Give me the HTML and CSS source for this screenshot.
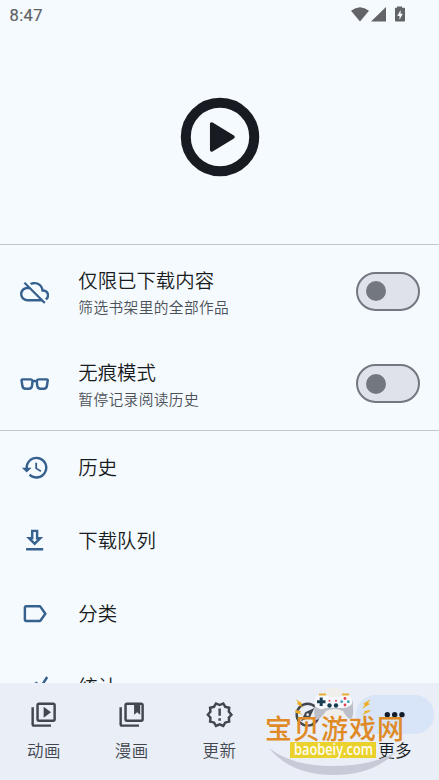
FILE: index.html
```html
<!DOCTYPE html>
<html lang="zh-CN">
<head>
<meta charset="utf-8">
<title>更多</title>
<link rel="stylesheet" href="styles.css">
</head>
<body>
<div class="screen">
  <header class="status">
    <span class="time">8:47</span>
    <svg class="status-icons" width="56" height="18" viewBox="0 0 56 18">
      <path d="M0 4.8Q9 -2.5 18 4.8L9 15.6z"/>
      <path d="M35 1v14.5H20z"/>
      <path d="M46 .5h5v1.3h2.2q.8 0 .8.8v12q0 .9-.8.9h-8.4q-.8 0-.8-.9v-12q0-.8.8-.8H46z"/>
      <path class="bolt" d="M49.6 4l-3.3 6h2.2v3.8l3.3-6h-2.2z"/>
    </svg>
  </header>
  <section class="hero">
    <svg class="logo" width="80" height="80" viewBox="0 0 80 80">
      <circle cx="40" cy="40" r="34.2"/>
      <path d="M31.7 27v26L53 40z"/>
    </svg>
  </section>
  <section class="modes">
    <div class="row tall">
      <svg class="icon" viewBox="0 0 24 24"><path d="M19.35 10.04A7.49 7.49 0 0 0 12 4c-1.48 0-2.85.43-4.01 1.17l1.46 1.46A5.497 5.497 0 0 1 17.5 11.5v.5H19c1.66 0 3 1.34 3 3 0 1.13-.64 2.11-1.56 2.62l1.45 1.45C23.16 18.16 24 16.68 24 15c0-2.64-2.05-4.78-4.65-4.96zM3 5.27l2.75 2.74C2.56 8.15 0 10.77 0 14c0 3.31 2.69 6 6 6h11.73l2 2L21 20.73 4.27 4 3 5.27zM7.73 10l8 8H6c-2.21 0-4-1.79-4-4s1.79-4 4-4h1.73z"/></svg>
      <div class="copy"><p class="title">仅限已下载内容</p><p class="sub">筛选书架里的全部作品</p></div>
      <span class="switch"></span>
    </div>
    <div class="row tall">
      <svg class="icon outline" viewBox="0 0 24 24"><path d="M2 8.500H8.300Q10.300 8.500 10.200 10.300L9.900 13.500Q9.500 16.200 7.200 16.200H4.500Q2.300 16.200 1.900 13.500L1.300 9.500Q1.200 8.500 2 8.500zM22 8.500H15.700Q13.700 8.500 13.800 10.300L14.100 13.500Q14.500 16.200 16.800 16.200H19.500Q21.700 16.200 22.100 13.500L22.700 9.500Q22.800 8.500 22 8.500zM10 10.200Q12 9.400 14 10.200"/></svg>
      <div class="copy"><p class="title">无痕模式</p><p class="sub">暂停记录阅读历史</p></div>
      <span class="switch"></span>
    </div>
  </section>
  <main class="list">
    <div class="row">
      <svg class="icon" viewBox="0 0 24 24"><path d="M13.5 3a9 9 0 0 0-9 9H1.500l4 4 4-4h-3a7 7 0 1 1 2.050 4.940l-1.420 1.420A9 9 0 1 0 13.500 3zM12.500 8v5l4.280 2.540.720-1.210-3.500-2.080V8z"/></svg>
      <p class="title">历史</p>
    </div>
    <div class="row">
      <svg class="icon" viewBox="0 0 24 24"><path d="M19 9h-4V3H9v6H5l7 7 7-7zm-8 2V5h2v6h1.170L12 13.170 9.830 11H11zm-6 7h14v2H5z"/></svg>
      <p class="title">下载队列</p>
    </div>
    <div class="row">
      <svg class="icon" viewBox="0 0 24 24"><path d="M17.630 5.840C17.270 5.330 16.670 5 16 5L5 5.010C3.900 5.010 3 5.900 3 7v10c0 1.100.900 1.990 2 1.990L16 19c.670 0 1.270-.330 1.630-.840L22 12l-4.370-6.160zM16 17H5V7h11l3.550 5L16 17z"/></svg>
      <p class="title">分类</p>
    </div>
    <div class="row">
      <svg class="icon outline" viewBox="0 0 24 24"><path d="M2 19L8 12.500 13.400 8.300 17 11.500 22.300 3.300"/></svg>
      <p class="title">统计</p>
    </div>
  </main>
  <nav class="nav">
    <div class="tab">
      <span class="pill"><svg class="icon" viewBox="0 0 24 24"><path d="M4 6H2v14c0 1.100.900 2 2 2h14v-2H4V6zm16-4H8c-1.100 0-2 .900-2 2v12c0 1.100.900 2 2 2h12c1.100 0 2-.900 2-2V4c0-1.100-.900-2-2-2zm0 14H8V4h12v12zM12 5.500v9l6-4.500z"/></svg></span>
      <span class="label">动画</span>
    </div>
    <div class="tab">
      <span class="pill"><svg class="icon" viewBox="0 0 24 24"><path d="M4 6H2v14c0 1.100.900 2 2 2h14v-2H4V6zm16-4H8c-1.100 0-2 .900-2 2v12c0 1.100.900 2 2 2h12c1.100 0 2-.900 2-2V4c0-1.100-.900-2-2-2zm0 14H8V4h6v8l2.500-1.900L19 12V4h1z"/></svg></span>
      <span class="label">漫画</span>
    </div>
    <div class="tab">
      <span class="pill"><svg class="icon" viewBox="0 0 24 24"><path d="M23 12l-2.440-2.780.340-3.680-3.610-.820-1.890-3.180L12 3 8.600 1.540 6.710 4.720l-3.610.810.340 3.680L1 12l2.440 2.780-.340 3.690 3.610.820 1.890 3.180L12 21l3.400 1.460 1.890-3.180 3.610-.820-.340-3.680L23 12zm-4.510 2.110.260 2.790-2.740.620-1.430 2.410L12 18.820l-2.580 1.110-1.430-2.410-2.740-.620.260-2.800L3.660 12l1.850-2.120-.260-2.780 2.740-.610 1.430-2.410L12 5.180l2.580-1.110 1.430 2.410 2.740.620-.260 2.790L20.340 12l-1.850 2.110zM11 15h2v2h-2zm0-8h2v6h-2z"/></svg></span>
      <span class="label">更新</span>
    </div>
    <div class="tab">
      <span class="pill"><svg class="icon" viewBox="0 0 24 24"><path d="M12 2a10 10 0 1 0 0 20 10 10 0 0 0 0-20zm0 18a8 8 0 1 1 0-16 8 8 0 0 1 0 16zm-5.500-2.500 7.510-3.490L17.500 6.500 9.990 9.990 6.500 17.500zm5.500-6.600a1.100 1.100 0 1 1 0 2.200 1.100 1.100 0 0 1 0-2.200z"/></svg></span>
      <span class="label"></span>
    </div>
    <div class="tab active">
      <span class="pill"><svg class="icon" viewBox="0 0 24 24"><circle cx="6" cy="12" r="2.200"/><circle cx="12" cy="12" r="2.200"/><circle cx="18" cy="12" r="2.200"/></svg></span>
      <span class="label">更多</span>
    </div>
  </nav>
  <svg class="badge" width="150" height="95" viewBox="260 685 150 95">
    <circle cx="334" cy="705" r="17" fill="#f1efec"/>
    <path d="M269 748Q292 766 332 766T396 752Q373 775 334 775Q291 775 269 748z" fill="#c9cad7"/>
    <path d="M321 694Q327 694 330 697H339Q342 694 348 694Q353 696 353 707Q354 718 350 719Q347 718 343 711Q334 707 326 711Q320 720 316 720Q313 718 315 704Q315 696 321 694z" fill="#bcbec8"/>
    <path d="M321 694Q327 694 330 697H339Q342 694 348 694Q353 696 352 704Q348 708 343 708H326Q319 711 315 706Q313 696 321 694z" fill="#f7f8fb"/>
    <path d="M319 694.500h7M342 694.500h7" fill="none" stroke="#e7ad35" stroke-width="1.800"/>
    <path d="M321.200 697.500v8.500M317 701.700h8.500" stroke="#173e51" stroke-width="3"/>
    <g fill="#173e51"><circle cx="329.500" cy="705.500" r="2.200"/><circle cx="336" cy="705.500" r="2.200"/></g>
    <g fill="#df4353"><circle cx="345" cy="698.500" r="1.400"/><circle cx="345" cy="705" r="1.400"/><circle cx="329.500" cy="700.800" r="1"/><circle cx="336" cy="700.800" r="1"/></g>
    <g fill="#419dba"><circle cx="341.700" cy="701.700" r="1.400"/><circle cx="348.300" cy="701.700" r="1.400"/></g>
    <path d="M295 699l7 4-1 2 3 3-7-4 1-2zM295 710l6 1-1 2 3 2-7-2zM371 699l-8 5 2 1-3 4 8-5-2-1zM371 710l-7 1 1 1-3 3 7-3z" fill="#edae24"/>
    <path d="M290 742h86v16h-86z" fill="#ead12b"/>
    <text class="brand" x="265" y="738.500" textLength="139">宝贝游戏网</text>
    <text class="domain" x="294" y="755" textLength="79" lengthAdjust="spacingAndGlyphs">baobeiy.com</text>
  </svg>
</div>
</body>
</html>
```

FILE: styles.css
```css
* { box-sizing: border-box; }
body { margin: 0; background: #f5faff; font-family: "Noto Sans CJK SC", sans-serif; color: #181c20; }
p { margin: 0; }
.screen { position: relative; width: 439px; height: 780px; overflow: hidden; display: flex; flex-direction: column; }
.status { height: 29px; flex: none; display: flex; justify-content: space-between; align-items: flex-start; padding: 6px 33px 0 9.5px; color: #5f6265; }
.time { font: 400 16.5px/19px Roboto, sans-serif; letter-spacing: .4px; -webkit-text-stroke: .2px #5f6265; }
.status-icons { fill: #626467; margin-right: -1px; }
.status-icons .bolt { fill: #f5faff; }
.hero { height: 215px; flex: none; display: flex; justify-content: center; padding: 67.5px 0 0 0; }
.logo circle { fill: none; stroke: #181c22; stroke-width: 10; }
.logo path { fill: #181c22; stroke: #181c22; stroke-width: 3.5; stroke-linejoin: round; }
.modes { flex: none; border-top: 1px solid #c2c6ce; border-bottom: 1px solid #c2c6ce; height: 187px; }
.list { flex: 1; min-height: 0; overflow: hidden; }
.row { height: 73.2px; display: flex; align-items: center; padding: 0 19.5px; }
.row.tall { height: 92.5px; }
.icon { width: 29.3px; height: 29.3px; flex: none; display: block; fill: #36618e; }
.icon.outline { fill: none; stroke: #36618e; stroke-width: 2; }
.row .title { margin: 0 0 2px 29.5px; }
.copy { margin: 2px 0 0 29.5px; flex: 1; }
.row .copy .title { margin: 0; }
.title { font-size: 19.4px; line-height: 28px; font-weight: 350; white-space: nowrap; }
.sub { font-size: 14.7px; line-height: 25px; letter-spacing: .4px; font-weight: 350; color: #4c5158; }
.switch { width: 64px; height: 39px; border: 2.4px solid #73777f; border-radius: 20px; background: #dfe2eb; display: flex; align-items: center; padding-left: 8px; }
.switch::before { content: ""; width: 20px; height: 20px; border-radius: 50%; background: #73777f; }
.nav { flex: none; height: 97px; background: #e9eef7; display: flex; padding-top: 12px; }
.tab { flex: 1; display: flex; flex-direction: column; align-items: center; color: #42474e; }
.pill { width: 78px; height: 39px; border-radius: 20px; display: flex; align-items: center; justify-content: center; }
.active .pill { background: #d8e4f7; }
.tab .icon { fill: #42474e; }
.tab.active { color: #181c20; }
.tab.active .icon { fill: #101c2b; }
.label { font-size: 16.5px; line-height: 24px; margin-top: 4px; height: 24px; font-weight: 350; letter-spacing: .4px; }
.badge { position: absolute; left: 260px; top: 685px; }
.brand { font: 500 27px "Noto Sans CJK SC", sans-serif; fill: #e08a25; }
.domain { font: 600 16px "Open Sans", sans-serif; fill: #fffdf0; }
```
